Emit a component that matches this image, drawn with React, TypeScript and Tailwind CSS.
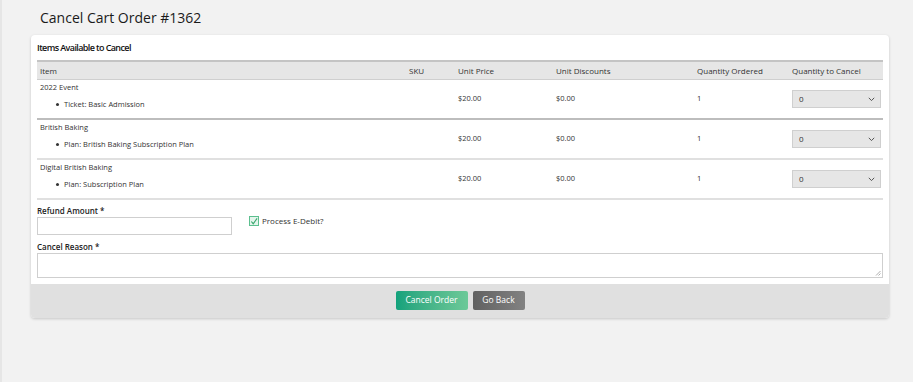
const rows = [
  { name: '2022 Event', item: 'Ticket: Basic Admission', price: '$20.00', discount: '$0.00', qty: '1' },
  { name: 'British Baking', item: 'Plan: British Baking Subscription Plan', price: '$20.00', discount: '$0.00', qty: '1' },
  { name: 'Digital British Baking', item: 'Plan: Subscription Plan', price: '$20.00', discount: '$0.00', qty: '1' },
];

function QtySelect() {
  return (
    <div className="relative w-[89px] h-[18px] bg-[#e6e6e6] border border-[#cfcfcf] flex items-center pl-[6px] text-[8px] text-[#333]">
      0
      <svg className="absolute right-[5px] top-[6px]" width="7" height="5" viewBox="0 0 7 5">
        <path d="M0.8 0.8 L3.5 3.6 L6.2 0.8" fill="none" stroke="#555" strokeWidth="1" />
      </svg>
    </div>
  );
}

export default function App() {
  return (
    <div
      className="w-[913px] h-[382px] bg-[#f2f2f2] border-l-2 border-[#e6e6e6] overflow-hidden text-[#222]"
      style={{ fontFamily: '"Open Sans", sans-serif' }}
    >
      <h1 className="pl-[38px] pt-[6px] h-[35px] text-[14px] leading-[24px] text-[#1a1a1a]">Cancel Cart Order #1362</h1>

      <div className="ml-[29px] w-[858px] rounded-[4px] bg-white shadow-[0_1px_3px_rgba(0,0,0,0.18)] overflow-hidden">
        <div className="px-[6px] pt-[6px]">
          <h2 className="text-[9px] font-semibold tracking-[-0.6px] leading-[14px] h-[19px] text-[#111]">Items Available to Cancel</h2>

          {/* Table */}
          <div className="text-[7.5px] text-[#333]">
            <div className="grid grid-cols-[372px_49px_98px_141px_95px_1fr] h-[20px] items-center text-[8px] bg-[#e6e6e6] border-t-2 border-[#c4c4c4] border-b border-b-[#cfcfcf]">
              <div className="pl-[3px]">Item</div>
              <div>SKU</div>
              <div>Unit Price</div>
              <div>Unit Discounts</div>
              <div>Quantity Ordered</div>
              <div>Quantity to Cancel</div>
            </div>

            {rows.map((r, i) => (
              <div
                key={i}
                className={`grid grid-cols-[372px_49px_98px_141px_95px_1fr] h-[40px] items-center border-b-2 ${i === 0 ? 'border-[#bdbdbd]' : 'border-[#e0e0e0]'}`}
              >
                <div className="self-start pt-[2px] pl-[3px] flex flex-col gap-[6px] leading-[11px]">
                  <div>{r.name}</div>
                  <div className="pl-[16px] flex items-center gap-[5px]">
                    <span className="w-[3px] h-[3px] rounded-full bg-[#333]" />
                    {r.item}
                  </div>
                </div>
                <div />
                <div>{r.price}</div>
                <div>{r.discount}</div>
                <div>{r.qty}</div>
                <div>
                  <QtySelect />
                </div>
              </div>
            ))}
          </div>

          {/* Form */}
          <div className="pt-[5px] pb-[6px]">
            <div className="flex gap-[17px]">
              <div>
                <label className="block text-[8px] font-semibold leading-[11px] text-[#222]">Refund Amount *</label>
                <div className="mt-[1px] w-[195px] h-[18px] border border-[#cfcfcf] bg-white" />
              </div>
              <div className="flex items-center gap-[3px] pt-[2px] h-[30px]">
                <span className="w-[10px] h-[10px] border border-[#5cbf8f] bg-[#e4f5ec] flex items-center justify-center">
                  <svg width="9" height="9" viewBox="0 0 9 9">
                    <path d="M1.5 4.5 L3.6 7 L8 1" fill="none" stroke="#3aa86f" strokeWidth="1.3" />
                  </svg>
                </span>
                <span className="text-[8px] text-[#333]">Process E-Debit?</span>
              </div>
            </div>
            <label className="block mt-[6px] text-[8px] font-semibold leading-[11px] text-[#222]">Cancel Reason *</label>
            <div className="relative mt-[1px] h-[25px] w-full border border-[#cfcfcf] bg-white">
              <svg className="absolute right-[1px] bottom-[1px]" width="6" height="6" viewBox="0 0 6 6">
                <path d="M5.5 1 L1 5.5 M5.5 3.5 L3.5 5.5" stroke="#999" strokeWidth="0.8" />
              </svg>
            </div>
          </div>
        </div>

        <div className="h-[34px] bg-[#e0e0e0] flex items-center justify-center gap-[5px] pb-[1px]">
          <button className="h-[19px] w-[72px] rounded-[2px] bg-gradient-to-r from-[#11a27c] to-[#6cc998] text-white text-[8.5px]">
            Cancel Order
          </button>
          <button className="h-[19px] w-[52px] rounded-[2px] bg-gradient-to-r from-[#616161] to-[#828282] text-white text-[8.5px]">
            Go Back
          </button>
        </div>
      </div>
    </div>
  );
}
